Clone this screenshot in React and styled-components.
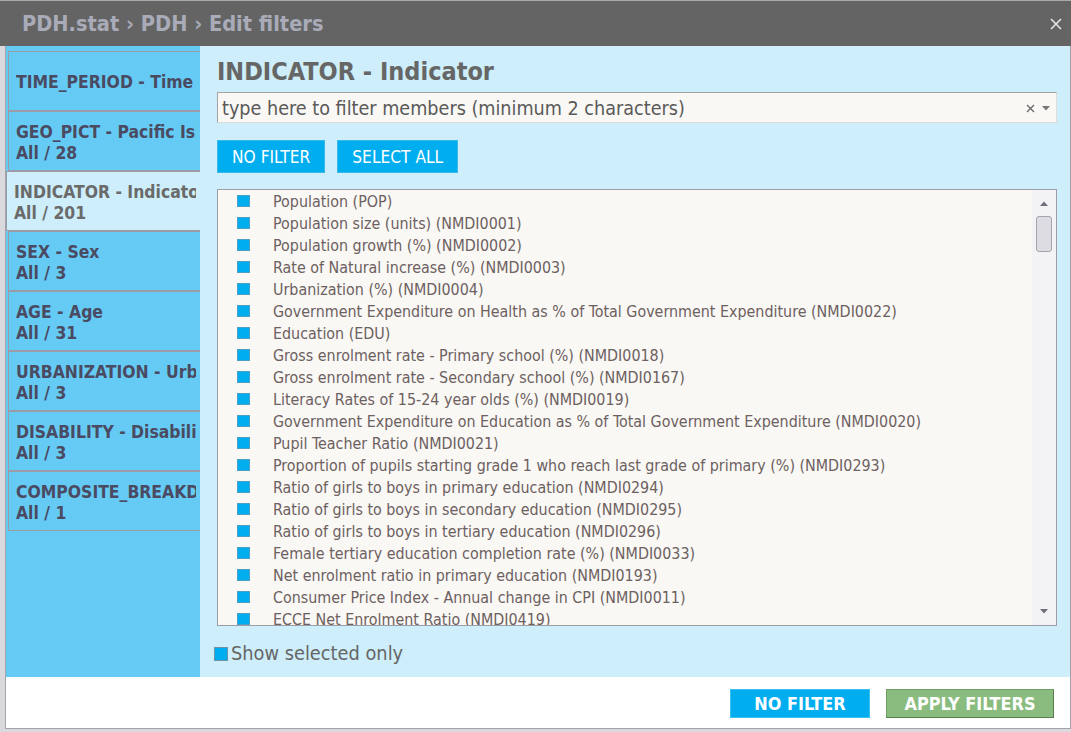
import React from "react";
import styled, { createGlobalStyle } from "styled-components";

const FONT = `"DejaVu Sans Condensed", "DejaVu Sans", Tahoma, sans-serif`;

const Global = createGlobalStyle`
  html, body { margin: 0; padding: 0; }
  body {
    width: 1071px;
    height: 732px;
    overflow: hidden;
    background: #d9d9de;
    font-family: ${FONT};
  }
  * { box-sizing: border-box; }
`;

const Dialog = styled.div`
  width: 1071px;
  height: 732px;
  display: flex;
  flex-direction: column;
  background: #d9d9de;
`;

const TitleBar = styled.div`
  height: 46px;
  flex: none;
  background: #646464;
  border-top: 1px solid #a9a9a9;
  display: flex;
  align-items: center;
  justify-content: space-between;
  padding: 0 9px 0 22px;
`;

const Title = styled.div`
  color: #a9abb8;
  font-weight: bold;
  font-size: 21.6px;
`;

const Close = styled.svg`
  display: block;
`;

const Frame = styled.div`
  flex: 1;
  margin: 0 0 3px 5px;
  border-left: 1px solid #a3a3ab;
  border-right: 1px solid #a3a3ab;
  border-bottom: 1px solid #a3a3ab;
  display: flex;
  flex-direction: column;
  min-height: 0;
`;

const Body = styled.div`
  height: 631px;
  display: flex;
  min-height: 0;
`;

const Sidebar = styled.div`
  width: 194px;
  flex: none;
  background: #66cbf4;
  padding-top: 5px;
  display: flex;
  flex-direction: column;
  overflow: hidden;
`;

const DimItem = styled.div`
  height: 60px;
  flex: none;
  margin-left: ${(p) => (p.$active ? "0" : "2px")};
  border: 1px solid #9c9ca6;
  border-right: none;
  background: ${(p) => (p.$active ? "#cdeefa" : "#66cbf4")};
  color: ${(p) => (p.$active ? "#6a6a6a" : "#4a4a62")};
  padding: 3px 4px 0 7px;
  display: flex;
  flex-direction: column;
  justify-content: center;
  font-weight: bold;
  font-size: 17.4px;
  line-height: 21px;
  white-space: nowrap;
`;

const DimLine = styled.div`
  overflow: hidden;
`;

const Panel = styled.div`
  flex: 1;
  background: #cdeefa;
  padding: 12px 13px 0 17px;
  display: flex;
  flex-direction: column;
  min-width: 0;
`;

const Heading = styled.h2`
  margin: 0;
  font-size: 25px;
  line-height: 28px;
  font-weight: bold;
  color: #666666;
`;

const FilterInput = styled.div`
  margin-top: 6px;
  height: 31px;
  background: #f9f8f5;
  border-top: 1px solid #a3a3a3;
  border-left: 1px solid #a3a3a3;
  border-bottom: 1px solid #dcdcdc;
  border-right: 1px solid #dcdcdc;
  display: flex;
  align-items: center;
  padding: 1px 6px 0 4px;
`;

const Placeholder = styled.span`
  flex: 1;
  color: #5a5a5a;
  font-size: 19.6px;
  white-space: nowrap;
`;

const InputIcons = styled.span`
  display: flex;
  align-items: center;
  gap: 7px;
`;

const ButtonRow = styled.div`
  display: flex;
  gap: 12px;
  margin-top: 17px;
`;

const BlueButton = styled.button`
  height: 33px;
  padding: 0 14px;
  background: #00aeef;
  color: #ffffff;
  border: 1px solid #39b8ea;
  font-family: ${FONT};
  font-size: 17.2px;
  cursor: pointer;
`;

const ListBox = styled.div`
  margin-top: 16px;
  height: 437px;
  border: 1px solid #9d9da5;
  background: #f9f8f5;
  display: flex;
  overflow: hidden;
`;

const Items = styled.div`
  flex: 1;
  overflow: hidden;
  padding-left: 19px;
`;

const Row = styled.div`
  height: 22px;
  display: flex;
  align-items: center;
  white-space: nowrap;
`;

const Check = styled.span`
  width: 13px;
  height: 12px;
  flex: none;
  background: #00aeef;
  border: 1px solid #4d9fc4;
  margin-right: 23px;
`;

const Label = styled.span`
  font-size: 15.9px;
  color: #6d6060;
`;

const ScrollTrack = styled.div`
  width: 24px;
  flex: none;
  background: #f3f3f6;
  display: flex;
  flex-direction: column;
  align-items: center;
  padding-top: 11px;
`;

const Thumb = styled.div`
  width: 16px;
  height: 36px;
  margin-top: 10px;
  border: 1px solid #a4a4ac;
  border-radius: 3px;
  background: #dcdce2;
`;

const Spacer = styled.div`
  flex: 1;
`;

const Arrow = styled.svg`
  display: block;
  margin-bottom: ${(p) => (p.$down ? "11px" : "0")};
`;

const ShowSelected = styled.label`
  margin-top: 16px;
  margin-left: -3px;
  display: flex;
  align-items: center;
  gap: 3px;
  font-size: 19.8px;
  color: #666666;
`;

const SmallCheck = styled.span`
  width: 14px;
  height: 14px;
  background: #00aeef;
  border: 1px solid #6d93a8;
`;

const Footer = styled.div`
  flex: 1;
  background: #ffffff;
  display: flex;
  justify-content: flex-end;
  align-items: flex-start;
  gap: 16px;
  padding: 12px 16px 0 0;
`;

const FooterButton = styled.button`
  height: 29px;
  padding: 0;
  width: ${(p) => (p.$green ? "168px" : "140px")};
  background: ${(p) => (p.$green ? "#89bc7e" : "#00aeef")};
  border: 1px solid ${(p) => (p.$green ? "#6f9e64" : "#3cc0f2")};
  border-bottom-color: ${(p) => (p.$green ? "#567f4d" : "#3cc0f2")};
  border-right-color: ${(p) => (p.$green ? "#567f4d" : "#3cc0f2")};
  color: #ffffff;
  font-family: ${FONT};
  font-weight: bold;
  font-size: 17.9px;
  cursor: pointer;
`;

const dims = [
  { t: "TIME_PERIOD - Time", s: null },
  { t: "GEO_PICT - Pacific Island Countries and Territories", s: "All / 28" },
  { t: "INDICATOR - Indicator", s: "All / 201", active: true },
  { t: "SEX - Sex", s: "All / 3" },
  { t: "AGE - Age", s: "All / 31" },
  { t: "URBANIZATION - Urbanization", s: "All / 3" },
  { t: "DISABILITY - Disability", s: "All / 3" },
  { t: "COMPOSITE_BREAKDOWN - Composite breakdown", s: "All / 1" },
];

const members = [
  "Population (POP)",
  "Population size (units) (NMDI0001)",
  "Population growth (%) (NMDI0002)",
  "Rate of Natural increase (%) (NMDI0003)",
  "Urbanization (%) (NMDI0004)",
  "Government Expenditure on Health as % of Total Government Expenditure (NMDI0022)",
  "Education (EDU)",
  "Gross enrolment rate - Primary school (%) (NMDI0018)",
  "Gross enrolment rate - Secondary school (%) (NMDI0167)",
  "Literacy Rates of 15-24 year olds (%) (NMDI0019)",
  "Government Expenditure on Education as % of Total Government Expenditure (NMDI0020)",
  "Pupil Teacher Ratio (NMDI0021)",
  "Proportion of pupils starting grade 1 who reach last grade of primary (%) (NMDI0293)",
  "Ratio of girls to boys in primary education (NMDI0294)",
  "Ratio of girls to boys in secondary education (NMDI0295)",
  "Ratio of girls to boys in tertiary education (NMDI0296)",
  "Female tertiary education completion rate (%) (NMDI0033)",
  "Net enrolment ratio in primary education (NMDI0193)",
  "Consumer Price Index - Annual change in CPI (NMDI0011)",
  "ECCE Net Enrolment Ratio (NMDI0419)",
  "Adolescent birth rate (NMDI0420)",
];

export default function App() {
  return (
    <>
      <Global />
      <Dialog>
        <TitleBar>
          <Title>PDH.stat › PDH › Edit filters</Title>
          <Close width="12" height="12" viewBox="0 0 12 12">
            <path d="M1 1L11 11M11 1L1 11" stroke="#e4e4e4" strokeWidth="1.6" />
          </Close>
        </TitleBar>
        <Frame>
          <Body>
            <Sidebar>
              {dims.map((d) => (
                <DimItem key={d.t} $active={d.active}>
                  <DimLine>{d.t}</DimLine>
                  {d.s && <DimLine>{d.s}</DimLine>}
                </DimItem>
              ))}
            </Sidebar>
            <Panel>
              <Heading>INDICATOR - Indicator</Heading>
              <FilterInput>
                <Placeholder>type here to filter members (minimum 2 characters)</Placeholder>
                <InputIcons>
                  <svg width="9" height="9" viewBox="0 0 9 9">
                    <path d="M1 1L8 8M8 1L1 8" stroke="#666" strokeWidth="1.3" />
                  </svg>
                  <svg width="8" height="5" viewBox="0 0 8 5">
                    <path d="M0 0H8L4 4.5Z" fill="#777" />
                  </svg>
                </InputIcons>
              </FilterInput>
              <ButtonRow>
                <BlueButton>NO FILTER</BlueButton>
                <BlueButton>SELECT ALL</BlueButton>
              </ButtonRow>
              <ListBox>
                <Items>
                  {members.map((m) => (
                    <Row key={m}>
                      <Check />
                      <Label>{m}</Label>
                    </Row>
                  ))}
                </Items>
                <ScrollTrack>
                  <Arrow width="8" height="5" viewBox="0 0 8 5">
                    <path d="M4 0.5L8 5H0Z" fill="#6f6f7a" />
                  </Arrow>
                  <Thumb />
                  <Spacer />
                  <Arrow $down width="8" height="5" viewBox="0 0 8 5">
                    <path d="M0 0H8L4 4.5Z" fill="#6f6f7a" />
                  </Arrow>
                </ScrollTrack>
              </ListBox>
              <ShowSelected>
                <SmallCheck />
                Show selected only
              </ShowSelected>
            </Panel>
          </Body>
          <Footer>
            <FooterButton>NO FILTER</FooterButton>
            <FooterButton $green>APPLY FILTERS</FooterButton>
          </Footer>
        </Frame>
      </Dialog>
    </>
  );
}
